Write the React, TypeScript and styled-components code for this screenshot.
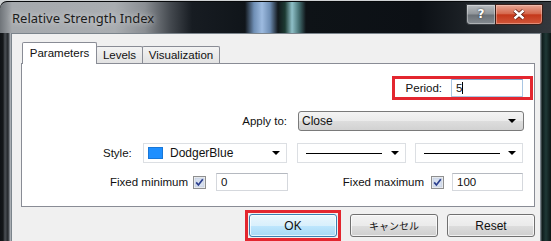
import React from "react";
import styled, { createGlobalStyle } from "styled-components";

const GlobalStyle = createGlobalStyle`
  html, body {
    margin: 0;
    padding: 0;
    background: #cfd2d4;
  }
  body {
    font-family: "Liberation Sans", Arial, sans-serif;
    font-size: 11px;
    color: #111;
  }
`;

const Window = styled.div`
  width: 551px;
  height: 240px;
  margin-top: 1px;
  overflow: hidden;
  display: flex;
  flex-direction: column;
  border-top-left-radius: 7px;
  background: linear-gradient(
    90deg,
    #0f1215 0,
    #141719 3px,
    #4b5055 5px,
    #23272b 8px,
    #8f959b 10px,
    #c3c7cb 11px,
    #c3c7cb 540px,
    #0d1a1a 542px,
    #1f3836 546px,
    #0b1414 551px
  );
`;

const TitleBar = styled.div`
  height: 31px;
  flex: none;
  display: flex;
  justify-content: space-between;
  align-items: flex-start;
  border-top: 1px solid #07090b;
  border-top-left-radius: 7px;
  background: linear-gradient(
    90deg,
    #6f7479 0,
    #a5a9ad 12px,
    #a9adb1 115px,
    #8a8e93 145px,
    #454a50 170px,
    #171c22 192px,
    #10151a 245px,
    #6f8fb5 254px,
    #9dbbe0 262px,
    #6d8db3 270px,
    #12181c 278px,
    #1c3a32 285px,
    #8fc0c8 292px,
    #457072 299px,
    #0e1317 306px,
    #0c1015 420px,
    #1e2328 470px,
    #33383d 551px
  );
`;

const Title = styled.div`
  font-family: "Noto Sans", "Open Sans", sans-serif;
  font-size: 13px;
  color: #1c1c1c;
  padding: 7px 0 0 12px;
  text-shadow: 0 0 6px rgba(235, 235, 235, 0.9);
`;

const Caption = styled.div`
  display: flex;
  margin: 2px 8px 0 0;
`;

const HelpButton = styled.div`
  width: 28px;
  height: 19px;
  border: 1px solid #3a3f44;
  border-right: none;
  border-radius: 0 0 0 4px;
  background: linear-gradient(#b9bdc1 0%, #8f9499 48%, #6a7076 52%, #858b91 100%);
  box-shadow: inset 0 0 0 1px rgba(255, 255, 255, 0.35);
  color: #fff;
  font-family: "DejaVu Sans", sans-serif;
  font-weight: 700;
  font-size: 12px;
  line-height: 19px;
  text-align: center;
  text-shadow: 0 0 2px #222;
`;

const CloseButton = styled.div`
  width: 46px;
  height: 19px;
  border: 1px solid #3a1e18;
  border-radius: 0 0 4px 0;
  background: linear-gradient(#e7a795 0%, #d66a4f 45%, #c4381b 52%, #d2573a 100%);
  box-shadow: inset 0 0 0 1px rgba(255, 220, 210, 0.4);
  display: flex;
  align-items: center;
  justify-content: center;
`;

const Client = styled.div`
  flex: 1;
  margin: 0 10px 0 11px;
  background: #f0f0f0;
  border: 1px solid #7b848c;
  border-bottom: none;
  padding: 8px 5px 0 9px;
  display: flex;
  flex-direction: column;
`;

const TabStrip = styled.div`
  display: flex;
  align-items: flex-end;
  height: 21px;
  padding-left: 1px;
`;

const Tab = styled.div<{ $w: number; $active?: boolean }>`
  position: relative;
  z-index: ${(p) => (p.$active ? 2 : 1)};
  width: ${(p) => p.$w}px;
  height: ${(p) => (p.$active ? 22 : 17)}px;
  margin-bottom: ${(p) => (p.$active ? -1 : 0)}px;
  margin-left: -1px;
  box-sizing: border-box;
  border: 1px solid #898c95;
  border-bottom: none;
  border-radius: 2px 2px 0 0;
  background: ${(p) =>
    p.$active ? "#fff" : "linear-gradient(#f3f3f3, #e2e2e2)"};
  font-size: 11.5px;
  line-height: ${(p) => (p.$active ? 20 : 16)}px;
  text-align: center;
  &:first-child {
    margin-left: 0;
  }
`;

const Panel = styled.div`
  height: 144px;
  box-sizing: border-box;
  border: 1px solid #898c95;
  background: #fff;
  display: flex;
  flex-direction: column;
`;

const Row = styled.div<{ $top: number; $h: number }>`
  display: flex;
  align-items: center;
  margin-top: ${(p) => p.$top}px;
  height: ${(p) => p.$h}px;
`;

const RightRow = styled(Row)<{ $right: number }>`
  justify-content: flex-end;
  padding-right: ${(p) => p.$right}px;
`;

const Highlight = styled.div<{ $pad: string }>`
  display: flex;
  align-items: center;
  border: 3px solid #e3262f;
  padding: ${(p) => p.$pad};
`;

const Label = styled.span<{ $gap: number }>`
  margin-right: ${(p) => p.$gap}px;
  white-space: nowrap;
  font-size: 11.5px;
`;

const TextBox = styled.div<{ $w: number; $focus?: boolean }>`
  width: ${(p) => p.$w}px;
  height: 18px;
  box-sizing: border-box;
  border: 1px solid ${(p) => (p.$focus ? "#a9c6e3" : "#d5d8dd")};
  border-top-color: ${(p) => (p.$focus ? "#7fa6cf" : "#b5b9c0")};
  background: #fff;
  padding: 0 4px;
  display: flex;
  align-items: center;
  font-size: 11.5px;
`;

const Caret = styled.span`
  display: inline-block;
  width: 1px;
  height: 12px;
  background: #000;
`;

const Arrow = styled.span`
  width: 0;
  height: 0;
  border-left: 4px solid transparent;
  border-right: 4px solid transparent;
  border-top: 4px solid #000;
`;

const AeroCombo = styled.div<{ $w: number }>`
  width: ${(p) => p.$w}px;
  height: 20px;
  box-sizing: border-box;
  border: 1px solid #7a7a7a;
  border-radius: 3px;
  background: linear-gradient(#f4f4f4 0%, #ebebeb 50%, #dddddd 51%, #d2d2d2 100%);
  display: flex;
  align-items: center;
  justify-content: space-between;
  padding: 0 7px 0 3px;
  font-size: 12px;
`;

const FlatCombo = styled.div<{ $w: number; $ml: number }>`
  width: ${(p) => p.$w}px;
  margin-left: ${(p) => p.$ml}px;
  height: 20px;
  box-sizing: border-box;
  border: 1px solid #dcdfe3;
  background: #fff;
  display: flex;
  align-items: center;
  justify-content: space-between;
  padding: 0 6px 0 8px;
  font-size: 12px;
`;

const ColorName = styled.span`
  display: flex;
  align-items: center;
  gap: 7px;
  margin-left: -4px;
`;

const Swatch = styled.span`
  width: 15px;
  height: 12px;
  background: #1e8fff;
  box-shadow: inset 0 0 0 1px #1877d8;
`;

const LineSample = styled.span`
  width: 76px;
  height: 1px;
  background: #000;
`;

const StyleLabel = styled.span`
  width: 40px;
  margin-left: 81px;
  font-size: 11.5px;
`;

const Group = styled.div<{ $w: number }>`
  width: ${(p) => p.$w}px;
  display: flex;
  align-items: center;
  justify-content: flex-end;
`;

const Check = styled.svg<{ $gap: number }>`
  width: 13px;
  height: 13px;
  margin-right: ${(p) => p.$gap}px;
  flex: none;
`;

const ButtonRow = styled.div`
  display: flex;
  justify-content: flex-end;
  align-items: center;
  gap: 9px;
  margin-top: 3px;
`;

const Button = styled.div<{ $default?: boolean }>`
  width: 88px;
  height: 23px;
  box-sizing: border-box;
  border: 1px solid ${(p) => (p.$default ? "#3c7fb1" : "#707070")};
  border-radius: 3px;
  background: ${(p) =>
    p.$default
      ? "linear-gradient(#eaf6fd 0%, #d9f0fc 50%, #bee6fd 51%, #a7d9f5 100%)"
      : "linear-gradient(#f2f2f2 0%, #ebebeb 50%, #dddddd 51%, #cfcfcf 100%)"};
  box-shadow: inset 0 0 0 1px rgba(255, 255, 255, 0.7);
  display: flex;
  align-items: center;
  justify-content: center;
  font-size: 12px;
`;

const Jp = styled.span`
  font-family: "Noto Sans CJK JP", sans-serif;
  font-size: 10px;
`;

const CheckBox = ({ gap }: { gap: number }) => (
  <Check $gap={gap} viewBox="0 0 13 13">
    <rect x="0.5" y="0.5" width="12" height="12" fill="#f4f4f4" stroke="#8e8f8f" />
    <rect x="2" y="2" width="9" height="9" fill="#d6dfee" stroke="#b8c3d6" strokeWidth="0.5" />
    <path d="M3.2 6.4 L5.4 9 L9.8 3.2" fill="none" stroke="#2c3f8e" strokeWidth="1.7" />
  </Check>
);

const App = () => (
  <>
    <GlobalStyle />
    <Window>
      <TitleBar>
        <Title>Relative Strength Index</Title>
        <Caption>
          <HelpButton>?</HelpButton>
          <CloseButton>
            <svg width="14" height="11" viewBox="0 0 14 11">
              <path d="M2.5 1.5 L11.5 9.5 M11.5 1.5 L2.5 9.5" stroke="#5a1a10" strokeWidth="4" />
              <path d="M2.5 1.5 L11.5 9.5 M11.5 1.5 L2.5 9.5" stroke="#fff" strokeWidth="2.4" />
            </svg>
          </CloseButton>
        </Caption>
      </TitleBar>
      <Client>
        <TabStrip>
          <Tab $w={75} $active>Parameters</Tab>
          <Tab $w={47}>Levels</Tab>
          <Tab $w={78}>Visualization</Tab>
        </TabStrip>
        <Panel>
          <RightRow $top={7} $h={33} $right={1}>
            <Highlight $pad="0 7px 0 11px">
              <Label $gap={9}>Period:</Label>
              <TextBox $w={72} $focus>
                5<Caret />
              </TextBox>
            </Highlight>
          </RightRow>
          <RightRow $top={7} $h={20} $right={10}>
            <Label $gap={11}>Apply to:</Label>
            <AeroCombo $w={226}>
              <span>Close</span>
              <Arrow />
            </AeroCombo>
          </RightRow>
          <Row $top={12} $h={20}>
            <StyleLabel>Style:</StyleLabel>
            <FlatCombo $w={144} $ml={0}>
              <ColorName>
                <Swatch />
                DodgerBlue
              </ColorName>
              <Arrow />
            </FlatCombo>
            <FlatCombo $w={109} $ml={10}>
              <LineSample />
              <Arrow />
            </FlatCombo>
            <FlatCombo $w={108} $ml={9}>
              <LineSample />
              <Arrow />
            </FlatCombo>
          </Row>
          <Row $top={10} $h={18}>
            <Group $w={266}>
              <Label $gap={5}>Fixed minimum</Label>
              <CheckBox gap={10} />
              <TextBox $w={72}>0</TextBox>
            </Group>
            <Group $w={235}>
              <Label $gap={7}>Fixed maximum</Label>
              <CheckBox gap={8} />
              <TextBox $w={71}>100</TextBox>
            </Group>
          </Row>
        </Panel>
        <ButtonRow>
          <Highlight $pad="1px">
            <Button $default>OK</Button>
          </Highlight>
          <Button>
            <Jp>キャンセル</Jp>
          </Button>
          <Button>Reset</Button>
        </ButtonRow>
      </Client>
    </Window>
  </>
);

export default App;
